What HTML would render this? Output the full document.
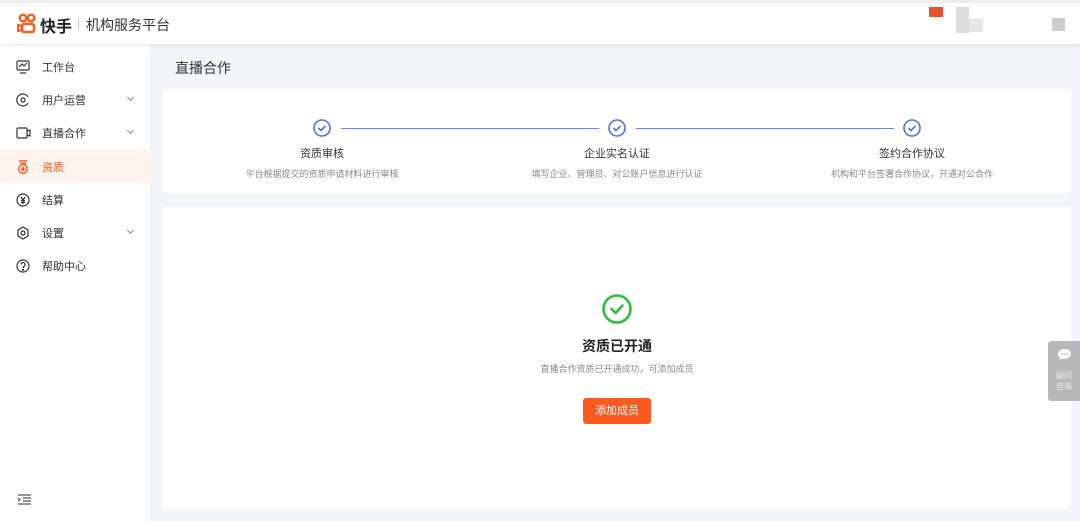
<!DOCTYPE html>
<html><head><meta charset="utf-8"><style>
*{margin:0;padding:0;box-sizing:border-box}
body{width:1080px;height:521px;overflow:hidden;background:#f4f5f7;font-family:"Liberation Sans","Noto Sans CJK SC",sans-serif;position:relative;color:#333}
.top{position:absolute;left:0;top:0;width:1080px;height:3px;background:#eee}
.hdr{position:absolute;left:0;top:3px;width:1080px;height:41px;background:#fff;box-shadow:0 2px 4px rgba(0,0,0,.08);z-index:2}
.side{position:absolute;left:0;top:44px;width:151px;height:477px;background:#fff;border-right:1px solid #eceef2}
.item{position:absolute;left:0;width:151px;height:33px;display:flex;align-items:center;font-size:11px;color:#333}
.item svg{position:absolute;left:16px}
.item span{position:absolute;left:42px}
.item .ar{position:absolute;left:128px;width:5px;height:5px;border-right:1px solid #888;border-bottom:1px solid #888;transform:rotate(45deg);top:12px}
.act{background:#fff3ee;color:#fe5a1f}
.card{position:absolute;left:163px;width:908px;background:#fff;border-radius:4px}
.st{position:absolute;text-align:center;width:300px}
.st b{display:block;font-weight:normal;font-size:11px;color:#333;margin-top:0}
.st i{display:block;font-style:normal;font-size:9px;color:#888;margin-top:6px}
</style></head><body>
<div class="top"></div>
<div class="hdr">
<svg style="position:absolute;left:17px;top:10px" width="20" height="22" viewBox="0 0 20 22"><circle cx="6" cy="5" r="3.3" fill="none" stroke="#fe5a1f" stroke-width="2.4"/><circle cx="14" cy="5" r="3.3" fill="none" stroke="#fe5a1f" stroke-width="2.4"/><rect x="5" y="11" width="12" height="8" rx="2" fill="none" stroke="#fe5a1f" stroke-width="2.4"/><path d="M5 13 L1 12 L1 18 L5 17" fill="none" stroke="#fe5a1f" stroke-width="2.2"/></svg>
<div style="position:absolute;left:40px;top:10px;font-size:16px;font-weight:bold;color:#222">快手</div>
<div style="position:absolute;left:78px;top:15px;width:1px;height:12px;background:#ccc"></div>
<div style="position:absolute;left:86px;top:12px;font-size:14px;color:#333">机构服务平台</div>
<div style="position:absolute;left:929px;top:4px;width:14px;height:10px;background:#e4522c"></div>
<div style="position:absolute;left:956px;top:4px;width:13px;height:26px;background:#ddd"></div>
<div style="position:absolute;left:969px;top:16px;width:14px;height:13px;background:#e5e5e5"></div>
<div style="position:absolute;left:1052px;top:15px;width:13px;height:13px;background:#ccc"></div>
</div>
<div class="side">
<div class="item" style="top:6px"><svg width="14" height="14" viewBox="0 0 14 14" fill="none" stroke="#333" stroke-width="1.2"><rect x="1" y="1" width="12" height="9" rx="1"/><path d="M4 13h6M3 7l3-3 2 2 3-3"/></svg><span>工作台</span></div>
<div class="item" style="top:39px"><svg width="14" height="14" viewBox="0 0 14 14" fill="none" stroke="#333" stroke-width="1.2"><path d="M12 4A6 6 0 1 0 12 10"/><circle cx="7" cy="7" r="2"/></svg><span>用户运营</span><i class="ar"></i></div>
<div class="item" style="top:72px"><svg width="16" height="14" viewBox="0 0 16 14" fill="none" stroke="#333" stroke-width="1.2"><rect x="1" y="2" width="10" height="10" rx="1"/><path d="M11 5l3-1v6l-3-1"/></svg><span>直播合作</span><i class="ar"></i></div>
<div class="item act" style="top:106px"><svg width="14" height="14" viewBox="0 0 14 14" fill="none" stroke="#fe5a1f" stroke-width="1.4"><path d="M3 1h8M4 3.5h6"/><circle cx="7" cy="9" r="4.3"/><circle cx="7" cy="9" r="1.2" fill="#fe5a1f"/></svg><span>资质</span></div>
<div class="item" style="top:139px"><svg width="14" height="14" viewBox="0 0 14 14" fill="none" stroke="#333" stroke-width="1.2"><circle cx="7" cy="7" r="6"/><path d="M5 4l2 3 2-3M7 7v4M5 7.5h4M5 9.5h4"/></svg><span>结算</span></div>
<div class="item" style="top:172px"><svg width="14" height="14" viewBox="0 0 14 14" fill="none" stroke="#333" stroke-width="1.2"><path d="M7 1l5 3v6l-5 3-5-3V4z"/><circle cx="7" cy="7" r="2"/></svg><span>设置</span><i class="ar"></i></div>
<div class="item" style="top:205px"><svg width="14" height="14" viewBox="0 0 14 14" fill="none" stroke="#333" stroke-width="1.2"><circle cx="7" cy="7" r="6"/><path d="M5 5.5a2 2 0 1 1 2.5 2V9"/><circle cx="7" cy="10.8" r=".5" fill="#333"/></svg><span>帮助中心</span></div>
<svg style="position:absolute;left:18px;top:450px" width="13" height="11" viewBox="0 0 13 11" fill="none" stroke="#555" stroke-width="1.2"><path d="M0 1h13M5 4h8M5 7h8M0 10h13M0 4l2 1.5L0 7"/></svg>
</div>
<div style="position:absolute;left:175px;top:58px;font-size:14px;color:#333">直播合作</div>
<div class="card" style="top:89px;height:105px">
<div style="position:absolute;left:178px;top:39px;width:258px;height:1px;background:#6b86ee"></div>
<div style="position:absolute;left:473px;top:39px;width:258px;height:1px;background:#6b86ee"></div>
</div>
<svg style="position:absolute;left:313px;top:119px" width="18" height="18" viewBox="0 0 18 18" fill="none" stroke="#4f70ee" stroke-width="1.6"><circle cx="9" cy="9" r="8"/><path d="M5.5 9l2.5 2.5 4.5-4.5"/></svg>
<svg style="position:absolute;left:608px;top:119px" width="18" height="18" viewBox="0 0 18 18" fill="none" stroke="#4f70ee" stroke-width="1.6"><circle cx="9" cy="9" r="8"/><path d="M5.5 9l2.5 2.5 4.5-4.5"/></svg>
<svg style="position:absolute;left:903px;top:119px" width="18" height="18" viewBox="0 0 18 18" fill="none" stroke="#4f70ee" stroke-width="1.6"><circle cx="9" cy="9" r="8"/><path d="M5.5 9l2.5 2.5 4.5-4.5"/></svg>
<div class="st" style="left:172px;top:145px"><b>资质审核</b><i>平台根据提交的资质申请材料进行审核</i></div>
<div class="st" style="left:467px;top:145px"><b>企业实名认证</b><i>填写企业、管理员、对公账户信息进行认证</i></div>
<div class="st" style="left:762px;top:145px"><b>签约合作协议</b><i>机构和平台签署合作协议，开通对公合作</i></div>
<div class="card" style="top:207px;height:302px"></div>
<svg style="position:absolute;left:602px;top:294px" width="30" height="30" viewBox="0 0 30 30" fill="none" stroke="#2ebd3c" stroke-width="2.6"><circle cx="15" cy="15" r="13.5"/><path d="M9.5 15l4 4 7-7.5" stroke-linecap="round" stroke-linejoin="round"/></svg>
<div style="position:absolute;left:467px;top:336px;width:300px;text-align:center;font-size:14px;font-weight:bold;color:#222">资质已开通</div>
<div style="position:absolute;left:467px;top:362px;width:300px;text-align:center;font-size:9px;color:#888">直播合作资质已开通成功，可添加成员</div>
<div style="position:absolute;left:583px;top:398px;width:68px;height:26px;background:#fe5a1f;border-radius:3px;color:#fff;font-size:11px;text-align:center;line-height:26px">添加成员</div>
<div style="position:absolute;left:1048px;top:341px;width:32px;height:60px;background:#b8b8b8;border-radius:3px 0 0 3px">
<svg style="position:absolute;left:9px;top:7px" width="15" height="13" viewBox="0 0 15 13"><path d="M7.5 1C3.5 1 1 3.3 1 6c0 1.5.8 2.8 2 3.6L2.5 12l3-1.5c.6.2 1.3.2 2 .2 4 0 6.5-2.2 6.5-4.7S11.5 1 7.5 1z" fill="#fff"/><circle cx="5" cy="6" r=".9" fill="#b8b8b8"/><circle cx="7.5" cy="6" r=".9" fill="#b8b8b8"/><circle cx="10" cy="6" r=".9" fill="#b8b8b8"/></svg>
<div style="position:absolute;left:0;top:29px;width:32px;text-align:center;font-size:8px;line-height:11px;color:#eee">疑问<br>咨询</div>
</div>
</body></html>
